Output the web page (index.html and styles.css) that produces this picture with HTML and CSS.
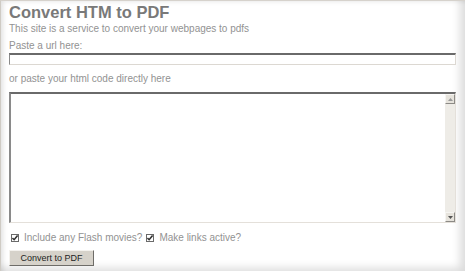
FILE: index.html
```html
<!DOCTYPE html>
<html lang="en">
<head>
    <meta charset="UTF-8">
    <title>Convert HTM to PDF</title>
    <link rel="stylesheet" href="styles.css">
</head>
<body>
    <div class="frame">
        <h1 class="page-title">Convert HTM to PDF</h1>
        <p class="page-intro">This site is a service to convert your webpages to pdfs</p>
        <form class="convert-form">
            <label class="field-label" for="url">Paste a url here:</label>
            <input type="text" class="url-input" id="url">
            <label class="field-label code-label" for="code">or paste your html code directly here</label>
            <div class="code-box">
                <textarea class="code-input" id="code"></textarea>
                <div class="scroll-bar">
                    <span class="scroll-btn">
                        <svg width="5" height="3" viewBox="0 0 5 3"><path d="M0 3h5L2.5 0z" fill="#999"/></svg>
                    </span>
                    <span class="scroll-track"></span>
                    <span class="scroll-btn">
                        <svg width="5" height="3" viewBox="0 0 5 3"><path d="M0 0h5L2.5 3z" fill="#555"/></svg>
                    </span>
                </div>
            </div>
            <div class="option-row">
                <label class="option">
                    <span class="check-box"><svg width="6" height="6" viewBox="0 0 7 7"><path d="M0.5 3.5l2 2 4-5" fill="none" stroke="#333" stroke-width="1.8"/></svg></span>
                    Include any Flash movies?
                </label>
                <label class="option">
                    <span class="check-box"><svg width="6" height="6" viewBox="0 0 7 7"><path d="M0.5 3.5l2 2 4-5" fill="none" stroke="#333" stroke-width="1.8"/></svg></span>
                    Make links active?
                </label>
            </div>
            <button type="button" class="convert-btn">Convert to PDF</button>
        </form>
    </div>
</body>
</html>
```

FILE: styles.css
```css
body {
    margin: 0;
    background: #fff;
    font-family: 'Liberation Sans', Arial, sans-serif;
    color: #929292;
}
.frame {
    height: 271px;
    box-sizing: border-box;
    border-top: 1px solid #d6d2cc;
    border-left: 1px solid #cfcbc4;
    padding: 1px 10px 0 8px;
    box-shadow: inset 5px 3px 5px -3px rgba(0, 0, 0, 0.12),
                inset -11px -9px 9px -6px rgba(0, 0, 0, 0.14);
}
.page-title {
    margin: 0;
    font-size: 16.5px;
    line-height: 20px;
    font-weight: bold;
    color: #797979;
}
.page-intro {
    margin: 1px 0 0;
    font-size: 10px;
    line-height: 12px;
}
.convert-form {
    display: flex;
    flex-direction: column;
    align-items: flex-start;
}
.field-label {
    margin-top: 5px;
    font-size: 10px;
    line-height: 12px;
}
.code-label {
    margin-top: 8px;
}
.url-input {
    width: 447px;
    height: 12px;
    box-sizing: border-box;
    margin: 1px 0 0;
    padding: 0;
    border: 1px solid #dcd8d2;
    border-top: 2px solid #6a6a6a;
    border-left: 1px solid #8a8a8a;
    background: #fff;
}
.code-box {
    display: flex;
    width: 447px;
    height: 131px;
    margin-top: 7px;
    box-sizing: border-box;
    border-top: 2px solid #6a6a6a;
    border-left: 2px solid #8a8a8a;
    border-right: 1px solid #e4e0da;
    border-bottom: 1px solid #e4e0da;
}
.code-input {
    flex: 1;
    margin: 0;
    padding: 0;
    border: none;
    resize: none;
    outline: none;
    background: #fff;
}
.scroll-bar {
    display: flex;
    flex-direction: column;
    width: 10px;
    background: #eeece7;
}
.scroll-btn {
    display: flex;
    align-items: center;
    justify-content: center;
    height: 10px;
    box-sizing: border-box;
    background: #e6e3dc;
    border-top: 1px solid #f6f5f2;
    border-left: 1px solid #f6f5f2;
    border-right: 1px solid #8c8a86;
    border-bottom: 1px solid #8c8a86;
}
.scroll-track {
    flex: 1;
}
.option-row {
    display: flex;
    gap: 4px;
    margin-top: 9px;
    font-size: 10px;
    line-height: 12px;
}
.option {
    display: flex;
    align-items: center;
    gap: 5px;
}
.check-box {
    display: flex;
    align-items: center;
    justify-content: center;
    width: 8px;
    height: 8px;
    box-sizing: border-box;
    margin-left: 2px;
    border: 1px solid #6a6a6a;
    background: #fff;
}
.option + .option .check-box {
    margin-left: 0;
}
.convert-btn {
    width: 85px;
    height: 16px;
    margin-top: 6px;
    padding: 0;
    font-family: 'Liberation Sans', Arial, sans-serif;
    font-size: 9px;
    line-height: 14px;
    color: #222;
    background: #d6d2ca;
    border: 1px solid;
    border-color: #f4f2ee #6e6c68 #6e6c68 #f4f2ee;
}
```
